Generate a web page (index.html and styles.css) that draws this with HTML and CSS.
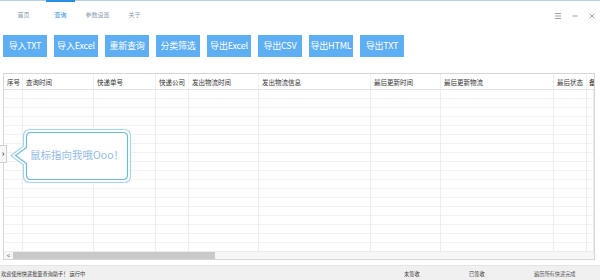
FILE: index.html
```html
<!DOCTYPE html>
<html lang="zh-CN">
<head>
<meta charset="utf-8">
<title>快递批量查询助手</title>
<link rel="stylesheet" href="styles.css">
</head>
<body>
<div class="app">
  <div class="topbar">
    <div class="tabs">
      <div class="tab"><span class="bar"></span><span class="label">首页</span></div>
      <div class="tab active"><span class="bar"></span><span class="label">查询</span></div>
      <div class="tab"><span class="bar"></span><span class="label">参数设置</span></div>
      <div class="tab"><span class="bar"></span><span class="label">关于</span></div>
    </div>
    <div class="winctl">
      <svg class="wicon" viewBox="0 0 8 8" width="8" height="8"><path d="M1 1.5H7M1 4H7M1 6.5H7" stroke="#8c98aa" stroke-width="0.9" fill="none"/></svg>
      <svg class="wicon" viewBox="0 0 8 8" width="8" height="8"><path d="M1.5 4H6.5" stroke="#8c98aa" stroke-width="0.9" fill="none"/></svg>
      <svg class="wicon" viewBox="0 0 8 8" width="8" height="8"><path d="M1.8 1.8L6.2 6.2M6.2 1.8L1.8 6.2" stroke="#8c98aa" stroke-width="0.9" fill="none"/></svg>
    </div>
  </div>

  <div class="toolbar">
    <div class="btn">导入TXT</div>
    <div class="btn">导入Excel</div>
    <div class="btn">重新查询</div>
    <div class="btn">分类筛选</div>
    <div class="btn">导出Excel</div>
    <div class="btn">导出CSV</div>
    <div class="btn">导出HTML</div>
    <div class="btn">导出TXT</div>
  </div>

  <div class="table">
    <div class="grid">
      <div class="th">序号</div>
      <div class="th">查询时间</div>
      <div class="th">快递单号</div>
      <div class="th">快递公司</div>
      <div class="th">发出物流时间</div>
      <div class="th">发出物流信息</div>
      <div class="th">最后更新时间</div>
      <div class="th">最后更新物流</div>
      <div class="th">最后状态</div>
      <div class="th last">备</div>
      <div class="td"></div><div class="td"></div><div class="td"></div><div class="td"></div><div class="td"></div>
      <div class="td"></div><div class="td"></div><div class="td"></div><div class="td"></div><div class="td"></div>
    </div>
    <div class="hscroll">
      <span class="arrow">&lt;</span>
      <div class="thumb"></div>
    </div>
  </div>

  <div class="status">
    <span class="msg">欢迎使用快递批量查询助手！ 运行中</span>
    <span class="s1">未签收</span>
    <span class="s2">已签收</span>
    <span class="s3">遍历所有快递完成</span>
  </div>

  <div class="handle">›</div>
  <div class="tip">
    <svg class="tipshape" viewBox="0 0 122 56" width="122" height="56">
      <path d="M20 1.5H114Q120.5 1.5 120.5 8V48Q120.5 54.5 114 54.5H20Q13.5 54.5 13.5 48V37L1 27.5L13.5 18V8Q13.5 1.5 20 1.5Z" fill="#ffffff" stroke="#a6d4ea" stroke-width="1.2"/>
      <path d="M21 4.5H113Q117.5 4.5 117.5 9V47Q117.5 51.5 113 51.5H21Q16.5 51.5 16.5 47V35.6L5.5 27.5L16.5 19.4V9Q16.5 4.5 21 4.5Z" fill="#ffffff" stroke="#6fb9d9" stroke-width="1.2"/>
    </svg>
    <span class="tiptext">鼠标指向我哦Ooo！</span>
  </div>
</div>
</body>
</html>
```

FILE: styles.css
```css
* { box-sizing: border-box; }
html, body { margin: 0; padding: 0; background: #ffffff; }
body { font-family: "Noto Sans CJK SC", "Noto Sans", sans-serif; color: #333; }

.app {
  position: relative;
  width: 600px;
  height: 280px;
  display: flex;
  flex-direction: column;
  overflow: hidden;
}

.topbar {
  height: 30px;
  border-top: 1px solid #b4cfe6;
  display: flex;
  align-items: flex-start;
}
.tabs { display: flex; padding-left: 5px; }
.tab {
  width: 37px;
  height: 29px;
  display: flex;
  flex-direction: column;
  align-items: center;
}
.tab .bar { width: 29px; height: 2px; margin-top: -1px; }
.tab.active .bar { background: #2b8de0; }
.tab .label {
  margin-top: 9px;
  font-size: 6px;
  line-height: 8px;
  color: #8a9bb2;
}
.tab.active .label { color: #2b8de0; }

.winctl {
  margin-left: auto;
  display: flex;
  gap: 9px;
  padding-top: 11px;
  padding-right: 4px;
}
.wicon { display: block; }

.toolbar {
  display: flex;
  gap: 7px;
  padding: 5px 0 0 3px;
}
.btn {
  width: 44px;
  height: 22px;
  background: #5daef2;
  color: #ffffff;
  font-size: 9px;
  line-height: 22px;
  text-align: center;
  white-space: nowrap;
  letter-spacing: -0.2px;
}

.table {
  margin: 16px 5px 0 3px;
  height: 187px;
  border: 1px solid #d6d6d6;
  display: flex;
  flex-direction: column;
}
.grid {
  flex: 1;
  display: grid;
  grid-template-columns: 19px 71px 62px 33px 70px 112px 70px 113px 33px 1fr;
  grid-template-rows: 16px 1fr;
  overflow: hidden;
}
.th {
  font-size: 6.5px;
  line-height: 16px;
  padding-left: 3px;
  color: #333;
  white-space: nowrap;
  overflow: hidden;
  border-bottom: 1px solid #e2e2e2;
  border-right: 1px solid #f0f0f0;
}
.th.last { padding-left: 2px; border-right: none; }
.td {
  border-right: 1px solid #ededed;
  background: repeating-linear-gradient(to bottom, transparent 0, transparent 8px, #f2f2f2 8px, #f2f2f2 9px);
}

.hscroll {
  height: 8px;
  display: flex;
  align-items: center;
  background: #f6f6f6;
  border-top: 1px solid #ececec;
}
.arrow {
  width: 9px;
  font-size: 6px;
  line-height: 8px;
  text-align: center;
  color: #555;
}
.thumb {
  width: 202px;
  height: 7px;
  background: #c9c9c9;
}

.status {
  margin-top: 5px;
  height: 15px;
  background: #f0f0f0;
  border-top: 1px solid #e4e4e4;
  display: flex;
  align-items: center;
  font-size: 5.2px;
  color: #333;
  white-space: nowrap;
}
.status .msg { padding-left: 1px; width: 404px; }
.status .s1 { width: 65px; }
.status .s2 { width: 65px; }
.status .s3 { color: #555; }

.handle {
  position: absolute;
  left: 0;
  top: 145px;
  width: 7px;
  height: 18px;
  border: 1px solid #cfcfcf;
  border-left: none;
  background: #f7f7f7;
  font-size: 9px;
  line-height: 15px;
  text-align: center;
  color: #222;
}

.tip {
  position: absolute;
  left: 10px;
  top: 128px;
  width: 122px;
  height: 56px;
}
.tipshape { position: absolute; left: 0; top: 0; }
.tiptext {
  position: absolute;
  left: 20px;
  top: 19px;
  font-size: 10.5px;
  line-height: 16px;
  color: #93bbe6;
  white-space: nowrap;
}
```
